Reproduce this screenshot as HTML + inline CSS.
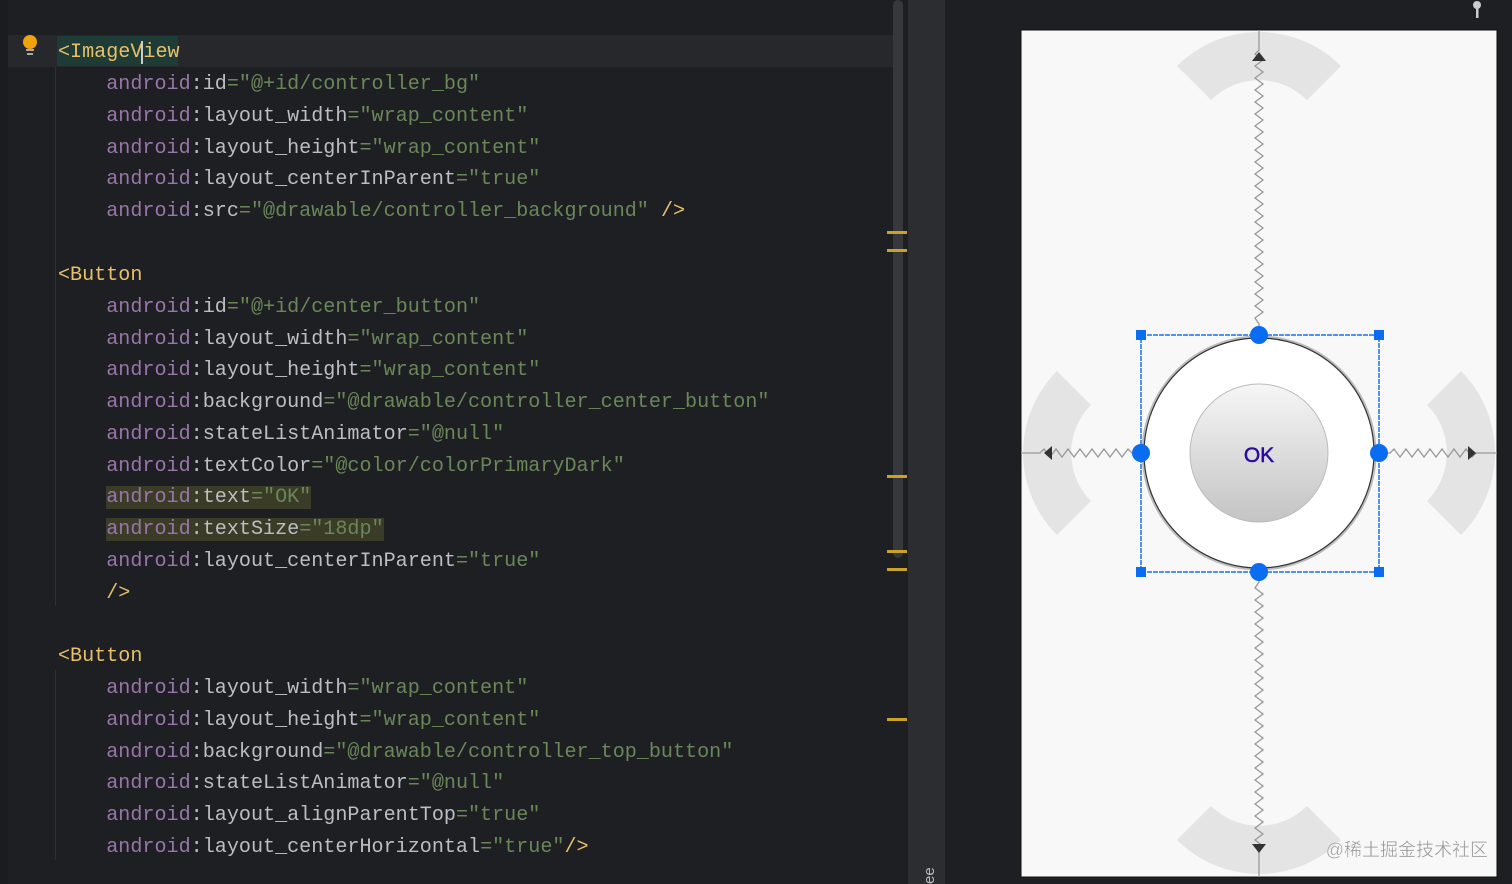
<!DOCTYPE html>
<html><head><meta charset="utf-8"><style>
*{margin:0;padding:0;box-sizing:border-box}
body{width:1512px;height:884px;overflow:hidden;background:#1e1f22;position:relative;font-family:"Liberation Mono",monospace}
#ed{position:absolute;left:0;top:0;width:908px;height:884px;background:#1e1f22}
#code{position:absolute;left:0;top:2.5px}
.ln{position:absolute;left:58px;height:32px;line-height:32px;font-size:20.1px;white-space:pre;color:#bcbec4}
.t{color:#e8bf6a}.p{color:#9876aa}.g{color:#6a8759}
.hl{background:#3a3c27}
.mk{position:absolute;left:887px;width:20px;height:3px;background:#c9a227}
</style></head><body>
<div id="ed">
<div style="position:absolute;left:0;top:35px;width:893px;height:32px;background:#26282c"></div>
<div style="position:absolute;left:57px;top:36px;width:121px;height:30px;background:#1f3b36"></div>
<div style="position:absolute;left:55px;top:66px;width:1px;height:540px;background:#2e3033"></div>
<div style="position:absolute;left:55px;top:670px;width:1px;height:190px;background:#2e3033"></div>
<div style="position:absolute;left:0;top:0;width:8px;height:884px;background:#1b1c1f"></div>
<svg style="position:absolute;left:20px;top:34px" width="20" height="24"><circle cx="10" cy="8" r="7" fill="#f0a30a"/><rect x="6" y="15" width="8" height="2" fill="#aaa"/><rect x="7" y="19" width="6" height="2" fill="#aaa"/></svg>
<div id="code">
<div class="ln" style="top:34px"><span class="t">&lt;ImageV</span><span style="border-left:2px solid #ccc;margin-left:-1px"></span><span class="t">iew</span></div>
<div class="ln" style="top:66px">    <span class="p">android</span>:id<span class="g">="@+id/controller_bg"</span></div>
<div class="ln" style="top:98px">    <span class="p">android</span>:layout_width<span class="g">="wrap_content"</span></div>
<div class="ln" style="top:130px">    <span class="p">android</span>:layout_height<span class="g">="wrap_content"</span></div>
<div class="ln" style="top:161px">    <span class="p">android</span>:layout_centerInParent<span class="g">="true"</span></div>
<div class="ln" style="top:193px">    <span class="p">android</span>:src<span class="g">="@drawable/controller_background"</span> <span class="t">/&gt;</span></div>
<div class="ln" style="top:257px"><span class="t">&lt;Button</span></div>
<div class="ln" style="top:289px">    <span class="p">android</span>:id<span class="g">="@+id/center_button"</span></div>
<div class="ln" style="top:321px">    <span class="p">android</span>:layout_width<span class="g">="wrap_content"</span></div>
<div class="ln" style="top:352px">    <span class="p">android</span>:layout_height<span class="g">="wrap_content"</span></div>
<div class="ln" style="top:384px">    <span class="p">android</span>:background<span class="g">="@drawable/controller_center_button"</span></div>
<div class="ln" style="top:416px">    <span class="p">android</span>:stateListAnimator<span class="g">="@null"</span></div>
<div class="ln" style="top:448px">    <span class="p">android</span>:textColor<span class="g">="@color/colorPrimaryDark"</span></div>
<div class="ln" style="top:479px">    <span class="hl"><span class="p">android</span>:text<span class="g">="OK"</span></span></div>
<div class="ln" style="top:511px">    <span class="hl"><span class="p">android</span>:textSize<span class="g">="18dp"</span></span></div>
<div class="ln" style="top:543px">    <span class="p">android</span>:layout_centerInParent<span class="g">="true"</span></div>
<div class="ln" style="top:575px">    <span class="t">/&gt;</span></div>
<div class="ln" style="top:638px"><span class="t">&lt;Button</span></div>
<div class="ln" style="top:670px">    <span class="p">android</span>:layout_width<span class="g">="wrap_content"</span></div>
<div class="ln" style="top:702px">    <span class="p">android</span>:layout_height<span class="g">="wrap_content"</span></div>
<div class="ln" style="top:734px">    <span class="p">android</span>:background<span class="g">="@drawable/controller_top_button"</span></div>
<div class="ln" style="top:765px">    <span class="p">android</span>:stateListAnimator<span class="g">="@null"</span></div>
<div class="ln" style="top:797px">    <span class="p">android</span>:layout_alignParentTop<span class="g">="true"</span></div>
<div class="ln" style="top:829px">    <span class="p">android</span>:layout_centerHorizontal<span class="g">="true"</span><span class="t">/&gt;</span></div>
</div>
<div style="position:absolute;left:893px;top:0;width:10px;height:558px;border-radius:5px;background:#37383b"></div>
<div class="mk" style="top:231px"></div><div class="mk" style="top:249px"></div><div class="mk" style="top:475px"></div><div class="mk" style="top:550px"></div><div class="mk" style="top:568px"></div><div class="mk" style="top:718px"></div>
</div>
<div style="position:absolute;left:908px;top:0;width:37px;height:884px;background:#2b2d30"></div>
<div style="position:absolute;left:921px;font-family:'Liberation Sans',sans-serif;font-size:15px;color:#bbb;transform:rotate(-90deg);transform-origin:left top;top:884px">ee</div>
<svg style="position:absolute;left:1470px;top:0" width="14" height="20"><circle cx="7" cy="5" r="4" fill="#ccc"/><rect x="6" y="6" width="2.5" height="12" fill="#ccc"/></svg>
<svg style="position:absolute;left:0;top:0" width="1512" height="884">
<defs>
<linearGradient id="bg" x1="0" y1="0" x2="0" y2="1"><stop offset="0" stop-color="#f6f6f6"/><stop offset="1" stop-color="#c4c4c4"/></linearGradient>
</defs>
<rect x="1021" y="30" width="476" height="847" fill="#f8f8f8" stroke="#111" stroke-width="1"/>
<g fill="#e4e4e4">
<path d="M1177,66 A116,116 0 0 1 1341,66 L1307,100 A68,68 0 0 0 1211,100 Z"/>
<path d="M1177,840 A116,116 0 0 0 1341,840 L1307,806 A68,68 0 0 1 1211,806 Z"/>
<path d="M1057,371 A116,116 0 0 0 1057,535 L1091,501 A68,68 0 0 1 1091,405 Z"/>
<path d="M1461,371 A116,116 0 0 1 1461,535 L1427,501 A68,68 0 0 0 1427,405 Z"/>
</g>
<g fill="none" stroke="#999" stroke-width="1.3">
<polyline points="1259,30 1259,50 1255,54 1263,60 1255,66 1263,72 1255,78 1263,84 1255,90 1263,96 1255,102 1263,108 1255,114 1263,120 1255,126 1263,132 1255,138 1263,144 1255,150 1263,156 1255,162 1263,168 1255,174 1263,180 1255,186 1263,192 1255,198 1263,204 1255,210 1263,216 1255,222 1263,228 1255,234 1263,240 1255,246 1263,252 1255,258 1263,264 1255,270 1263,276 1255,282 1263,288 1255,294 1263,300 1255,306 1263,312 1255,318 1259,324 1259,335"/>
<polyline points="1259,572 1259,582 1255,588 1263,594 1255,600 1263,606 1255,612 1263,618 1255,624 1263,630 1255,636 1263,642 1255,648 1263,654 1255,660 1263,666 1255,672 1263,678 1255,684 1263,690 1255,696 1263,702 1255,708 1263,714 1255,720 1263,726 1255,732 1263,738 1255,744 1263,750 1255,756 1263,762 1255,768 1263,774 1255,780 1263,786 1255,792 1263,798 1255,804 1263,810 1255,816 1263,822 1255,828 1263,834 1255,840 1263,846 1259,852 1259,877"/>
<polyline points="1021,453 1040,453 1044,449 1050,457 1056,449 1062,457 1068,449 1074,457 1080,449 1086,457 1092,449 1098,457 1104,449 1110,457 1116,449 1122,457 1128,449 1132,453 1141,453"/>
<polyline points="1379,453 1390,453 1394,449 1400,457 1406,449 1412,457 1418,449 1424,457 1430,449 1436,457 1442,449 1448,457 1454,449 1460,457 1466,449 1472,457 1476,453 1497,453"/>
</g>
<g fill="#333">
<path d="M1252,61 L1259,52 L1266,61 Z"/><path d="M1252,844 L1266,844 L1259,853 Z"/>
<path d="M1052,446 L1052,460 L1044,453 Z"/><path d="M1468,446 L1468,460 L1476,453 Z"/>
</g>
<circle cx="1259" cy="453" r="116" fill="#fff" stroke="#bbb" stroke-width="3"/>
<circle cx="1259" cy="453" r="115" fill="none" stroke="#333" stroke-width="1.2"/>
<circle cx="1259" cy="453" r="69" fill="url(#bg)" stroke="#bbb" stroke-width="1"/>
<text x="1259" y="462" text-anchor="middle" font-family="Liberation Sans, sans-serif" font-size="21" fill="#2a0aa0" stroke="#2a0aa0" stroke-width="0.5">OK</text>
<rect x="1141" y="335" width="238" height="237" fill="none" stroke="#1a73e8" stroke-width="1.5" stroke-dasharray="5,1"/>
<g fill="#0a6cf0">
<rect x="1136" y="330" width="10" height="10"/><rect x="1374" y="330" width="10" height="10"/><rect x="1136" y="567" width="10" height="10"/><rect x="1374" y="567" width="10" height="10"/>
<circle cx="1259" cy="335" r="9"/><circle cx="1259" cy="572" r="9"/><circle cx="1141" cy="453" r="9"/><circle cx="1379" cy="453" r="9"/>
</g>
<text x="1488" y="856" text-anchor="end" font-family="Liberation Sans, 'Noto Sans CJK SC', sans-serif" font-size="18" fill="#999" stroke="#fff" stroke-width="0.3">@稀土掘金技术社区</text>
</svg>
</body></html>
